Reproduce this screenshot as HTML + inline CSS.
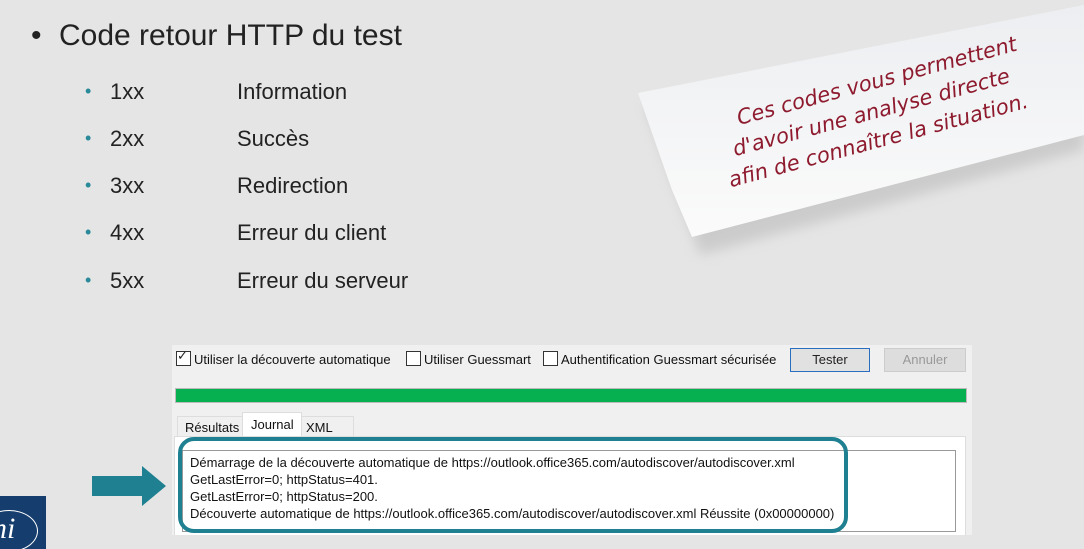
<!DOCTYPE html>
<html><head><meta charset="utf-8"><style>
body{margin:0;width:1084px;height:549px;background:#e5e5e5;position:relative;overflow:hidden;font-family:"Liberation Sans",sans-serif;color:#222}
.a{position:absolute;white-space:nowrap}
.h{font-size:30px;left:59px;top:19px}
.b1{left:31px;top:19px;font-size:30px}
.s{font-size:22px}
.dot{color:#2a8a9a;font-size:18px}
.w{font-size:13px;color:#111}
.cb{position:absolute;width:13px;height:13px;border:1px solid #333;background:#fff}
</style></head><body>
<div class="a b1">•</div><div class="a h">Code retour HTTP du test</div>
<div class="a dot" style="left:85px;top:81px">•</div><div class="a s" style="left:110px;top:79px">1xx</div><div class="a s" style="left:237px;top:79px">Information</div>
<div class="a dot" style="left:85px;top:128px">•</div><div class="a s" style="left:110px;top:126px">2xx</div><div class="a s" style="left:237px;top:126px">Succès</div>
<div class="a dot" style="left:85px;top:175px">•</div><div class="a s" style="left:110px;top:173px">3xx</div><div class="a s" style="left:237px;top:173px">Redirection</div>
<div class="a dot" style="left:85px;top:222px">•</div><div class="a s" style="left:110px;top:220px">4xx</div><div class="a s" style="left:237px;top:220px">Erreur du client</div>
<div class="a dot" style="left:85px;top:270px">•</div><div class="a s" style="left:110px;top:268px">5xx</div><div class="a s" style="left:237px;top:268px">Erreur du serveur</div>

<svg class="a" style="left:0;top:0" width="1084" height="300">
<defs><linearGradient id="g" x1="0" y1="0" x2="0" y2="1"><stop offset="0" stop-color="#eceef1"/><stop offset="1" stop-color="#fbfbfb"/></linearGradient>
<filter id="f"><feGaussianBlur stdDeviation="6"/></filter></defs>
<polygon points="645,105 1084,20 1084,150 700,255" fill="#bbb" opacity=".6" filter="url(#f)"/>
<polygon points="638,93 1084,5 1084,135 692,237 672,190" fill="url(#g)"/>
<g transform="rotate(-15 880 110)" fill="#8e1a2e" font-family="'Comic Sans MS','DejaVu Sans',cursive" font-style="italic" font-size="21">
<text x="740" y="88">Ces codes vous permettent</text>
<text x="728" y="117">d'avoir une analyse directe</text>
<text x="716" y="146">afin de connaître la situation.</text>
</g></svg>

<div class="a" style="left:172px;top:345px;width:800px;height:190px;background:#f0f0f0"></div>
<div class="cb" style="left:176px;top:351px"></div><div class="a" style="left:177px;top:348px;font-size:13px">✓</div>
<div class="a w" style="left:194px;top:352px">Utiliser la découverte automatique</div>
<div class="cb" style="left:406px;top:351px"></div><div class="a w" style="left:424px;top:352px">Utiliser Guessmart</div>
<div class="cb" style="left:543px;top:351px"></div><div class="a w" style="left:561px;top:352px">Authentification Guessmart sécurisée</div>
<div class="a" style="left:790px;top:348px;width:78px;height:22px;border:1px solid #2a6ec0;background:#e1e1e1;font-size:13px;text-align:center;line-height:22px">Tester</div>
<div class="a" style="left:884px;top:348px;width:80px;height:22px;border:1px solid #ccc;background:#ddd;color:#999;font-size:13px;text-align:center;line-height:22px">Annuler</div>
<div class="a" style="left:175px;top:388px;width:790px;height:13px;background:#06b050;border:1px solid #bbb"></div>
<div class="a" style="left:177px;top:416px;width:175px;height:20px;border:1px solid #ddd"></div>
<div class="a w" style="left:185px;top:420px">Résultats</div>
<div class="a" style="left:242px;top:412px;width:58px;height:25px;background:#fff;border:1px solid #ddd;border-bottom:none"></div>
<div class="a w" style="left:251px;top:417px">Journal</div>
<div class="a w" style="left:306px;top:420px">XML</div>
<div class="a" style="left:174px;top:436px;width:790px;height:99px;background:#fff;border:1px solid #ddd"></div>
<div class="a" style="left:182px;top:450px;width:772px;height:80px;background:#fff;border:1px solid #999"></div>
<div class="a w" style="left:190px;top:454px;line-height:17px">Démarrage de la découverte automatique de https://outlook.office365.com/autodiscover/autodiscover.xml<br>GetLastError=0; httpStatus=401.<br>GetLastError=0; httpStatus=200.<br>Découverte automatique de https://outlook.office365.com/autodiscover/autodiscover.xml Réussite (0x00000000)</div>
<div class="a" style="left:178px;top:437px;width:662px;height:88px;border:4px solid #1e8090;border-radius:16px"></div>
<div class="a" style="left:0;top:535px;width:1084px;height:14px;background:#e5e5e5"></div>

<svg class="a" style="left:92px;top:466px" width="76" height="40"><polygon points="0,10 50,10 50,0 74,20 50,40 50,30 0,30" fill="#1e8090"/></svg>
<div class="a" style="left:0;top:496px;width:46px;height:53px;background:#153e6e;overflow:hidden"><div class="a" style="left:-8px;top:16px;color:#fff;font-family:'Liberation Serif',serif;font-style:italic;font-size:30px">ni</div><div class="a" style="left:-20px;top:14px;width:56px;height:40px;border:1.5px solid #fff;border-radius:50%"></div></div>
</body></html>
